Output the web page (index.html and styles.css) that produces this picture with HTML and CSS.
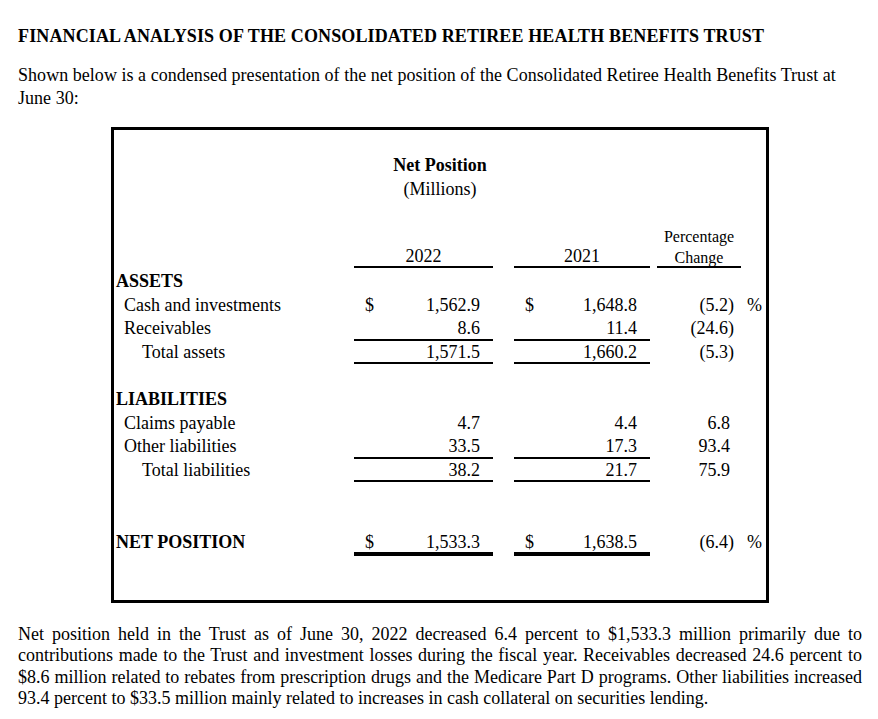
FILE: index.html
```html
<!DOCTYPE html>
<html lang="en">
<head>
<meta charset="utf-8">
<title>Financial Analysis</title>
<link rel="stylesheet" href="styles.css">
</head>
<body>
<div class="page">
  <h1 class="title">FINANCIAL ANALYSIS OF THE CONSOLIDATED RETIREE HEALTH BENEFITS TRUST</h1>
  <p class="intro">Shown below is a condensed presentation of the net position of the Consolidated Retiree Health Benefits Trust at<br>June 30:</p>

  <div class="statement">
    <div class="caption">
      <div class="caption-title">Net Position</div>
      <div>(Millions)</div>
    </div>

    <div class="row head">
      <div></div>
      <div class="yr ul">2022</div>
      <div></div>
      <div class="yr ul">2021</div>
      <div></div>
      <div class="pchg ul">Percentage<br>Change</div>
      <div></div>
    </div>

    <div class="row first">
      <div class="section">ASSETS</div>
    </div>
    <div class="row">
      <div class="item">Cash and investments</div>
      <div class="amt"><span>$</span><span class="n">1,562.9</span></div>
      <div></div>
      <div class="amt"><span>$</span><span class="n">1,648.8</span></div>
      <div></div>
      <div class="chg">(5.2<span class="cp">)</span></div>
      <div class="pct">%</div>
    </div>
    <div class="row">
      <div class="item">Receivables</div>
      <div class="amt ul"><span class="n">8.6</span></div>
      <div></div>
      <div class="amt ul"><span class="n">11.4</span></div>
      <div></div>
      <div class="chg">(24.6<span class="cp">)</span></div>
      <div></div>
    </div>
    <div class="row">
      <div class="total">Total assets</div>
      <div class="amt ul"><span class="n">1,571.5</span></div>
      <div></div>
      <div class="amt ul"><span class="n">1,660.2</span></div>
      <div></div>
      <div class="chg">(5.3<span class="cp">)</span></div>
      <div></div>
    </div>

    <div class="row gap-one"></div>

    <div class="row">
      <div class="section">LIABILITIES</div>
    </div>
    <div class="row">
      <div class="item">Claims payable</div>
      <div class="amt"><span class="n">4.7</span></div>
      <div></div>
      <div class="amt"><span class="n">4.4</span></div>
      <div></div>
      <div class="chg">6.8</div>
      <div></div>
    </div>
    <div class="row">
      <div class="item">Other liabilities</div>
      <div class="amt ul"><span class="n">33.5</span></div>
      <div></div>
      <div class="amt ul"><span class="n">17.3</span></div>
      <div></div>
      <div class="chg">93.4</div>
      <div></div>
    </div>
    <div class="row">
      <div class="total">Total liabilities</div>
      <div class="amt ul"><span class="n">38.2</span></div>
      <div></div>
      <div class="amt ul"><span class="n">21.7</span></div>
      <div></div>
      <div class="chg">75.9</div>
      <div></div>
    </div>

    <div class="row net">
      <div class="section">NET POSITION</div>
      <div class="amt ul-thick"><span>$</span><span class="n">1,533.3</span></div>
      <div></div>
      <div class="amt ul-thick"><span>$</span><span class="n">1,638.5</span></div>
      <div></div>
      <div class="chg">(6.4<span class="cp">)</span></div>
      <div class="pct">%</div>
    </div>
  </div>

  <p class="summary">
    <span class="jl">Net position held in the Trust as of June 30, 2022 decreased 6.4 percent to $1,533.3 million primarily due to</span>
    <span class="jl">contributions made to the Trust and investment losses during the fiscal year. Receivables decreased 24.6 percent to</span>
    <span class="jl">$8.6 million related to rebates from prescription drugs and the Medicare Part D programs. Other liabilities increased</span>
    <span class="last">93.4 percent to $33.5 million mainly related to increases in cash collateral on securities lending.</span>
  </p>
</div>
</body>
</html>
```

FILE: styles.css
```css
html, body {
  margin: 0;
  padding: 0;
  background: #ffffff;
}

body {
  font-family: "Liberation Serif", "Times New Roman", serif;
  color: #000000;
  font-size: 18px;
}

.page {
  width: 844px;
  padding: 25px 16px 0 18px;
}

.title {
  margin: 0;
  font-size: 18px;
  font-weight: bold;
  line-height: 22px;
  letter-spacing: 0.13px;
}

.intro {
  margin: 17px 0 0 0;
  line-height: 23px;
  letter-spacing: 0.04px;
}

.statement {
  margin: 17px 0 0 93px;
  width: 658px;
  box-sizing: border-box;
  border: 3px solid #000000;
  padding: 23px 0 44px 0;
}

.caption {
  text-align: center;
  line-height: 24px;
  margin-bottom: 25px;
}

.caption-title {
  font-weight: bold;
}

.row {
  display: grid;
  grid-template-columns: 240px 139px 21px 136px 7px 84px 1fr;
  height: 23.5px;
  line-height: 23.5px;
  white-space: nowrap;
}

.row.head {
  height: auto;
  align-items: end;
}

.row.first {
  margin-top: 2px;
}

.row.gap-one {
  height: 24px;
}

.row.net {
  margin-top: 49px;
  height: 25px;
  line-height: 23px;
}

.ul {
  background: linear-gradient(#000, #000) bottom / 100% 2px no-repeat;
}

.ul-thick {
  background: linear-gradient(#000, #000) bottom / 100% 4px no-repeat;
}

.yr {
  text-align: center;
  line-height: 23.5px;
}

.pchg {
  text-align: center;
  font-size: 16px;
  line-height: 21px;
}

.section {
  font-weight: bold;
  padding-left: 2px;
}

.item {
  padding-left: 10px;
}

.total {
  padding-left: 28px;
}

.amt {
  display: flex;
  padding: 0 13px 0 11px;
}

.amt .n {
  margin-left: auto;
}

.chg {
  text-align: right;
  padding-right: 11px;
}

.cp {
  margin-right: -4px;
}

.pct {
  padding-left: 6px;
}

.summary {
  margin: 21px 0 0 0;
  line-height: 21.3px;
}

.jl {
  display: block;
  text-align: justify;
  text-align-last: justify;
}

.last {
  display: block;
}
```
